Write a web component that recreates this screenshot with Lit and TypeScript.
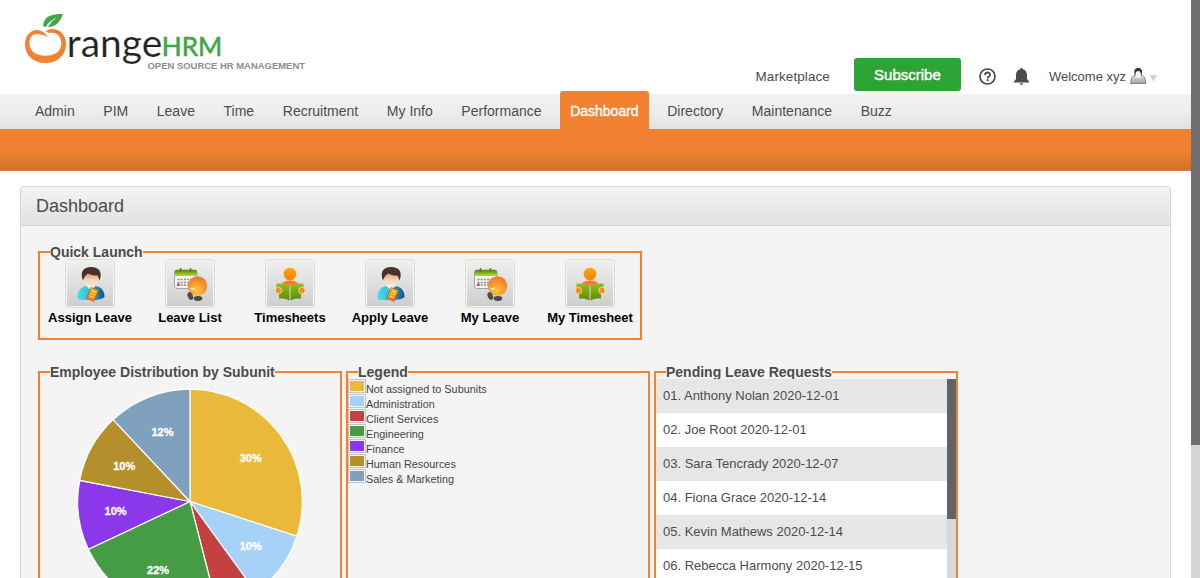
import { LitElement, html, css, svg } from "lit";
import { customElement } from "lit/decorators.js";
import { classMap } from "lit/directives/class-map.js";
import { styleMap } from "lit/directives/style-map.js";

const NAV = ["Admin", "PIM", "Leave", "Time", "Recruitment", "My Info", "Performance", "Dashboard", "Directory", "Maintenance", "Buzz"];

const LAUNCH = [
  ["person", "Assign Leave"],
  ["calendar", "Leave List"],
  ["reader", "Timesheets"],
  ["person", "Apply Leave"],
  ["calendar", "My Leave"],
  ["reader", "My Timesheet"],
];

const SUBUNITS = [
  { name: "Not assigned to Subunits", color: "#ebb939", pct: 30, label: true },
  { name: "Administration", color: "#a6d2f8", pct: 10, label: true },
  { name: "Client Services", color: "#c44142", pct: 6, label: false },
  { name: "Engineering", color: "#459c45", pct: 22, label: true },
  { name: "Finance", color: "#8a38ea", pct: 10, label: true },
  { name: "Human Resources", color: "#b58f2c", pct: 10, label: true },
  { name: "Sales & Marketing", color: "#80a1be", pct: 12, label: true },
];

const REQUESTS = [
  "01. Anthony Nolan 2020-12-01",
  "02. Joe Root 2020-12-01",
  "03. Sara Tencrady 2020-12-07",
  "04. Fiona Grace 2020-12-14",
  "05. Kevin Mathews 2020-12-14",
  "06. Rebecca Harmony 2020-12-15",
];

const ICONS: Record<string, unknown> = {
  person: svg`
    <defs>
      <linearGradient id="body" x1="0" x2="1"><stop offset="0" stop-color="#3fe0ee"/><stop offset=".5" stop-color="#35b5d6"/><stop offset="1" stop-color="#0b4f8c"/></linearGradient>
      <linearGradient id="face" x1="0" y1="0" x2="0" y2="1"><stop offset="0" stop-color="#c9966a"/><stop offset=".5" stop-color="#f3d3b8"/><stop offset="1" stop-color="#fbeee2"/></linearGradient>
      <linearGradient id="pad" x1="0" y1="0" x2="0" y2="1"><stop offset="0" stop-color="#ffb31c"/><stop offset="1" stop-color="#f27a05"/></linearGradient>
    </defs>
    <path d="M12 39c0-7 3-11 9-12l4 2 5-2c6 1 9 5 9 11-2 2-6 3-10 3H16c-2 0-4-1-4-2z" fill="url(#body)"/>
    <path d="M21 27l4 4 5-4-2-3h-5z" fill="#fdf3ea"/>
    <path d="M18 16c0-4 15.500-4 15.500 0 0 7-3 12.500-7.700 12.500S18 23 18 16z" fill="url(#face)"/>
    <path d="M17.500 21.500c-3.500-8.500.5-13.500 8-13.500 8 0 12 5 8.500 13.500l-1.800-5c-4 .5-7.500-1-9.500-2-2.200 1-3.700 3-5.200 7z" fill="#4b2f28"/>
    <path d="M25.500 28.500l7.500 2.800-4.500 11.200-7.500-3.500z" fill="url(#pad)" stroke="#9a5312" stroke-width=".6"/>
    <path d="M26.500 32l4.200 1.600M25.500 34.500l4.200 1.600M24.500 37l4 1.500" stroke="#fff0b8" stroke-width=".9"/>`,
  calendar: svg`
    <defs>
      <linearGradient id="cal" x1="0" y1="0" x2="0" y2="1"><stop offset="0" stop-color="#4f8a10"/><stop offset="1" stop-color="#b9dd29"/></linearGradient>
      <radialGradient id="ball" cx=".45" cy=".75" r=".7"><stop offset="0" stop-color="#ffc43a"/><stop offset="1" stop-color="#ee7c2c"/></radialGradient>
    </defs>
    <rect x="9" y="11" width="22.500" height="18.500" rx="2.500" fill="#f7f7f7" stroke="#9b9b9b" stroke-width=".9"/>
    <path d="M9 17v-4q0-2 2-2h18.500q2 0 2 2v4z" fill="url(#cal)"/>
    <path d="M15 9v4M25 9v4" stroke="#666" stroke-width="1.500"/>
    <path d="M12 20.500h17M12 23.500h17M12 26h11" stroke="#888" stroke-width="1.300" stroke-dasharray="2 1.200"/>
    <rect x="11.500" y="24.500" width="2.500" height="2.500" fill="#d4433a"/>
    <circle cx="32" cy="27" r="9.800" fill="url(#ball)"/>
    <path d="M24 28q3 3 6-.5-1 4-4 3.500z" fill="#fff1cf"/>
    <ellipse cx="24.800" cy="37" rx="2.600" ry="4" transform="rotate(-22 24.800 37)" fill="#4c4c4c"/>
    <ellipse cx="32.500" cy="39.500" rx="4.300" ry="2.400" fill="#4c4c4c"/>`,
  reader: svg`
    <defs>
      <linearGradient id="head" x1="0" y1="0" x2="0" y2="1"><stop offset="0" stop-color="#ffa800"/><stop offset="1" stop-color="#fb7f0c"/></linearGradient>
      <linearGradient id="book" x1="0" y1="0" x2="0" y2="1"><stop offset="0" stop-color="#8fc21b"/><stop offset="1" stop-color="#5d8a0c"/></linearGradient>
    </defs>
    <circle cx="24.500" cy="15" r="6.300" fill="url(#head)"/>
    <path d="M16 25c2-3 5-3.500 8.500-3.500s6.500.5 8.500 3.500l-8.500 2z" fill="#fb7a2c"/>
    <path d="M11 24.500c5 0 9 .5 13 2.500v14.500c-3-1.800-6-2-10.500-2V35l-2.500-1z" fill="url(#book)"/>
    <path d="M38 24.500c-5 0-9 .5-13 2.500v14.500c3-1.800 6-2 10.500-2V35l2.500-1z" fill="url(#book)"/>
    <circle cx="13" cy="31.500" r="3.200" fill="#fb8a10" stroke="#f3f3e0" stroke-width=".7"/>
    <circle cx="36.500" cy="31.500" r="3.200" fill="#fb8a10" stroke="#f3f3e0" stroke-width=".7"/>`,
};

@customElement("app-root")
export class AppRoot extends LitElement {
  static styles = css`
    :host { display: block; height: 578px; overflow: hidden; font-family: "Liberation Sans", Arial, sans-serif; color: #4c4c4c; background: #fff; }
    .window { display: flex; height: 578px; }
    .page { flex: 1; min-width: 0; }
    .track { width: 9px; background: #d5d5d5; }
    .thumb { height: 445px; background: #6f6f6f; }
    .header { display: flex; height: 94px; justify-content: space-between; }
    .logo { display: block; width: 320px; height: 94px; }
    .tools { display: flex; align-items: center; height: 34px; margin: 58px 33px 0 0; }
    .market { font-size: 13.5px; margin-top: 2px; letter-spacing: 0.08px; }
    .subscribe { width: 107px; height: 33px; line-height: 33px; text-align: center; background: #2ea336; color: #fff; font-size: 15px; border-radius: 3px; margin: 0 17px 0 24px; align-self: flex-start; -webkit-text-stroke: 0.4px #fff; }
    .welcome { font-size: 13px; margin: 2px 4px 0 19px; }
    .tools svg { display: block; flex: none; margin-top: 3px; }
    .tools .user { margin-top: 1px; }
    .bell { margin-left: 16px; }
    .nav { display: flex; align-items: flex-end; height: 35px; padding-left: 25px; gap: 8.62px; background: linear-gradient(#f1f1f1, #eeeeee 45%, #e2e2e2); }
    .tab { box-sizing: border-box; height: 35px; line-height: 34px; padding: 0 10px; font-size: 14px; white-space: nowrap; border-radius: 3px 3px 0 0; }
    .tab.active { height: 38px; padding-top: 3px; background: #f28232; color: #fff; -webkit-text-stroke: 0.35px #fff; }
    .band { height: 42px; background: linear-gradient(#f28232 50%, #d0702b 97%, #d98d57 100%); }
    .panel { margin: 15px 20px 0; border: 1px solid #d6d6d6; border-radius: 3px 3px 0 0; background: #f4f4f4; height: 600px; width: 1149px; }
    .title { height: 38px; line-height: 38px; padding-left: 15px; font-size: 18px; border-bottom: 1px solid #d6d6d6; background: linear-gradient(#f3f3f3, #e5e5e5 80%); }
    .content { padding: 18px 17px 0; }
    fieldset { box-sizing: border-box; min-width: 0; margin: 0; padding: 0; border: 2px solid #f28232; }
    legend { margin-left: 10px; padding: 0; font-size: 14px; font-weight: bold; line-height: 16px; height: 16px; white-space: nowrap; }
    .quick { width: 604px; height: 96px; }
    .launches { display: flex; margin-top: -1px; }
    .launch { width: 100px; display: flex; flex-direction: column; align-items: center; font-size: 13px; font-weight: bold; color: #000; white-space: nowrap; line-height: 17px; }
    .tile { box-sizing: border-box; width: 50px; height: 49px; border: 1px solid #dcdcd6; border-radius: 4px; background: linear-gradient(#f0f0f0, #cdcdcd); box-shadow: inset 0 0 0 1px #f2f2f0; margin-bottom: 1px; }
    .tile svg { display: block; margin: -1px; }
    .row { display: flex; gap: 4px; margin-top: 24px; }
    .row fieldset { width: 304px; height: 320px; }
    .pie { display: block; margin: -1px 0 0 -2px; }
    .pct { font-size: 11px; font-weight: bold; fill: #fff; text-anchor: middle; stroke: #fff; stroke-width: 0.3px; }
    .keys { margin-top: -1px; }
    .key { display: flex; height: 15px; font-size: 10.85px; line-height: 20px; color: #444; white-space: nowrap; }
    .swatch { box-sizing: border-box; width: 18px; height: 14px; border: 1px solid #c4c4c4; padding: 1px; flex: none; }
    .fill { height: 10px; width: 14px; }
    .scroll { display: flex; height: 300px; margin-top: -1px; }
    .list { flex: 1; }
    .item { height: 34px; line-height: 33px; padding-left: 7px; font-size: 13px; background: #fff; white-space: nowrap; }
    .item:nth-child(odd) { background: #e6e6e6; }
    .rail { width: 9px; background: #d8d8d8; }
    .grip { height: 140px; background: #626262; }
  `;

  private slices() {
    const cx = 152, cy = 122.5, r = 112.3;
    const point = (p: number, d: number) => {
      const a = (p / 50) * Math.PI;
      return [cx + d * Math.sin(a), cy - d * Math.cos(a)];
    };
    let start = 0;
    return SUBUNITS.map((s) => {
      const [x1, y1] = point(start, r);
      const [x2, y2] = point(start + s.pct, r);
      const [tx, ty] = point(start + s.pct / 2, 75);
      start += s.pct;
      return svg`
        <path d=${`M${cx} ${cy}L${x1} ${y1}A${r} ${r} 0 0 1 ${x2} ${y2}Z`} fill=${s.color} stroke="#fff" stroke-width="1.2"/>
        ${s.label ? svg`<text class="pct" x=${tx} y=${ty + 4.5}>${s.pct}%</text>` : ""}`;
    });
  }

  private logo() {
    return html`<svg class="logo" viewBox="0 0 320 94">
      <path d="M47.700 37.500C45 31.500 38 28 32 31.200 27 34 25 39 25 44c0 12 9 19 20.500 19S66 56 66 44c0-9-6-15-14-15-3 0-5 1-6.300 2.700 1.500-.2 2.500.5 3 1.300C57 31.500 61.300 37 61.300 43c0 9-7 12.700-15.800 12.700S29.500 52 29.500 43c0-6 3.500-9.500 9-8.800 4 .3 7 1.500 9.200 3.300z" fill="#f28232"/>
      <path d="M43 26C44 16 51 14 63 14c-3 8-7 13-15 13 2-4 5-7 9-9-6 2-9 5-11 9z" fill="#43a648"/>
      <text x="66.800" y="56.700" font-family="Lato" font-size="39" textLength="95.500" lengthAdjust="spacingAndGlyphs" fill="#222" stroke="#fff" stroke-width=".2">range</text>
      <text x="161.800" y="56.200" font-family="Lato" font-size="26.500" textLength="60.500" lengthAdjust="spacingAndGlyphs" fill="#43a648" stroke="#43a648" stroke-width=".6">HRM</text>
      <text x="147.500" y="68.700" font-family="Liberation Sans" font-weight="bold" font-size="9.400" textLength="157.500" lengthAdjust="spacingAndGlyphs" fill="#8a8f8a">OPEN SOURCE HR MANAGEMENT</text>
    </svg>`;
  }

  render() {
    return html`<div class="window">
      <div class="page">
        <div class="header">
          ${this.logo()}
          <div class="tools">
            <span class="market">Marketplace</span>
            <div class="subscribe">Subscribe</div>
            <svg width="19" height="19" viewBox="0 0 19 19"><circle cx="9.500" cy="9.500" r="7.500" fill="none" stroke="#4c4c4c" stroke-width="1.700"/><path d="M7 8c0-3.300 5.100-3.300 5.100-.3 0 1.700-2.500 1.800-2.500 3.700" fill="none" stroke="#4c4c4c" stroke-width="1.800"/><rect x="8.700" y="12.200" width="1.900" height="1.900" fill="#4c4c4c"/></svg>
            <svg class="bell" width="17" height="19" viewBox="0 0 17 19"><path d="M8.500 1c.8 0 1.300.5 1.300 1.300 3 .7 4.200 3 4.200 6v3.700l2 2.500V15.500H1V14.500l2-2.500V8.300c0-3 1.200-5.300 4.200-6C7.200 1.500 7.700 1 8.500 1zM6.800 16.300h3.400c0 2-3.400 2-3.400 0z" fill="#4c4c4c"/></svg>
            <span class="welcome">Welcome xyz</span>
            <svg class="user" width="28" height="18" viewBox="0 0 28 18"><defs><linearGradient id="usr" x1="0" y1="0" x2="0" y2="1"><stop offset="0" stop-color="#e4e4e4"/><stop offset="1" stop-color="#a0a0a0"/></linearGradient></defs><path d="M.7 16.500c0-5 1.500-8 4.500-8h6c3 0 4.500 3 4.500 8z" fill="url(#usr)" stroke="#777" stroke-width=".9"/><path d="M4.800 8C3.500 3 5 1 8.200 1s4.700 2 3.400 7z" fill="#333"/><ellipse cx="8.200" cy="7.500" rx="2.700" ry="3.500" fill="#f4f4f4"/><path d="M19.800 8h7.200l-3.600 7z" fill="#d4d4d4"/></svg>
          </div>
        </div>
        <div class="nav">${NAV.map((n) => html`<div class=${classMap({ tab: true, active: n === "Dashboard" })}>${n}</div>`)}</div>
        <div class="band"></div>
        <div class="panel">
          <div class="title">Dashboard</div>
          <div class="content">
            <fieldset class="quick">
              <legend>Quick Launch</legend>
              <div class="launches">${LAUNCH.map(([icon, label]) => html`
                <div class="launch"><div class="tile"><svg width="50" height="49" viewBox="0 0 49 49">${ICONS[icon]}</svg></div>${label}</div>`)}</div>
            </fieldset>
            <div class="row">
              <fieldset>
                <legend>Employee Distribution by Subunit</legend>
                <svg class="pie" width="302" height="240">${this.slices()}</svg>
              </fieldset>
              <fieldset>
                <legend>Legend</legend>
                <div class="keys">${SUBUNITS.map((s) => html`<div class="key"><div class="swatch"><div class="fill" style=${styleMap({ background: s.color })}></div></div>${s.name}</div>`)}</div>
              </fieldset>
              <fieldset>
                <legend>Pending Leave Requests</legend>
                <div class="scroll">
                  <div class="list">${REQUESTS.map((r) => html`<div class="item">${r}</div>`)}</div>
                  <div class="rail"><div class="grip"></div></div>
                </div>
              </fieldset>
            </div>
          </div>
        </div>
      </div>
      <div class="track"><div class="thumb"></div></div>
    </div>`;
  }
}
